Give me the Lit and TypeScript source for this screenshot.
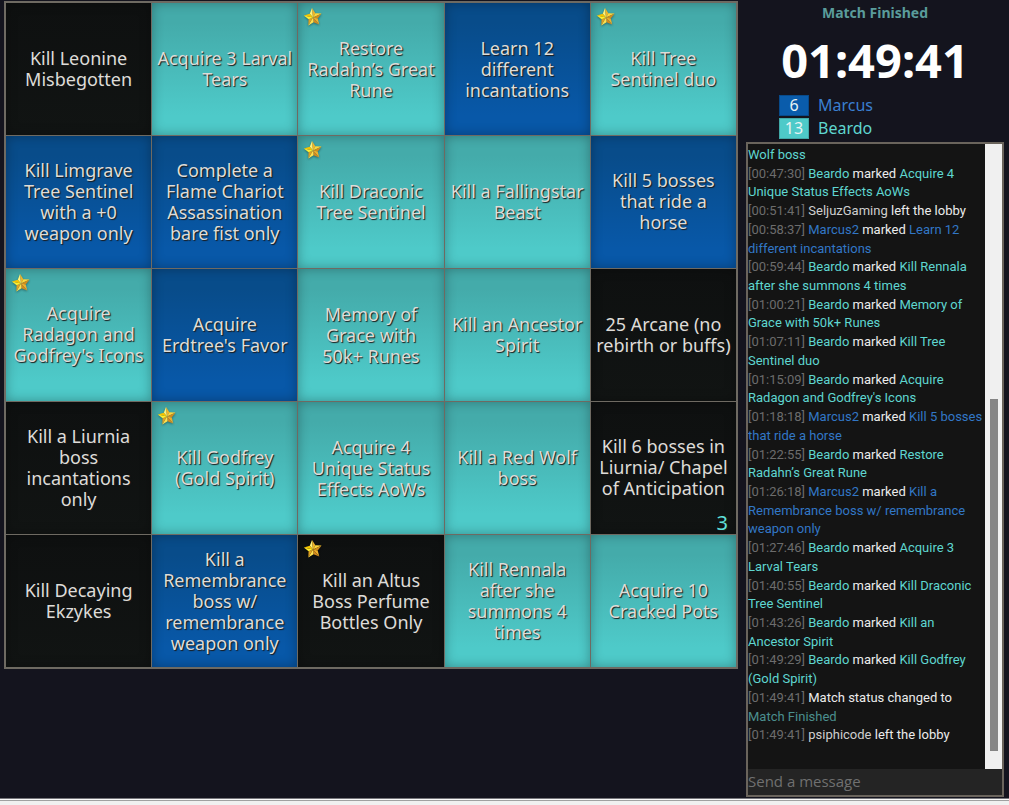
import { LitElement, html, css, svg, nothing } from "lit";
import { customElement, property } from "lit/decorators.js";
import { classMap } from "lit/directives/class-map.js";

type Owner = "none" | "marcus" | "beardo";

interface Goal {
  text: string;
  owner: Owner;
  starred?: boolean;
  count?: number;
}

const goals: Goal[] = [
  { text: "Kill Leonine\nMisbegotten", owner: "none" },
  { text: "Acquire 3 Larval\nTears", owner: "beardo" },
  { text: "Restore\nRadahn’s Great\nRune", owner: "beardo", starred: true },
  { text: "Learn 12\ndifferent\nincantations", owner: "marcus" },
  { text: "Kill Tree\nSentinel duo", owner: "beardo", starred: true },
  { text: "Kill Limgrave\nTree Sentinel\nwith a +0\nweapon only", owner: "marcus" },
  { text: "Complete a\nFlame Chariot\nAssassination\nbare fist only", owner: "marcus" },
  { text: "Kill Draconic\nTree Sentinel", owner: "beardo", starred: true },
  { text: "Kill a Fallingstar\nBeast", owner: "beardo" },
  { text: "Kill 5 bosses\nthat ride a\nhorse", owner: "marcus" },
  { text: "Acquire\nRadagon and\nGodfrey's Icons", owner: "beardo", starred: true },
  { text: "Acquire\nErdtree's Favor", owner: "marcus" },
  { text: "Memory of\nGrace with\n50k+ Runes", owner: "beardo" },
  { text: "Kill an Ancestor\nSpirit", owner: "beardo" },
  { text: "25 Arcane (no\nrebirth or buffs)", owner: "none" },
  { text: "Kill a Liurnia\nboss\nincantations\nonly", owner: "none" },
  { text: "Kill Godfrey\n(Gold Spirit)", owner: "beardo", starred: true },
  { text: "Acquire 4\nUnique Status\nEffects AoWs", owner: "beardo" },
  { text: "Kill a Red Wolf\nboss", owner: "beardo" },
  { text: "Kill 6 bosses in\nLiurnia/ Chapel\nof Anticipation", owner: "none", count: 3 },
  { text: "Kill Decaying\nEkzykes", owner: "none" },
  { text: "Kill a\nRemembrance\nboss w/\nremembrance\nweapon only", owner: "marcus" },
  { text: "Kill an Altus\nBoss Perfume\nBottles Only", owner: "none", starred: true },
  { text: "Kill Rennala\nafter she\nsummons 4\ntimes", owner: "beardo" },
  { text: "Acquire 10\nCracked Pots", owner: "beardo" },
];

interface Part {
  text: string;
  tone: "time" | "beardo" | "marcus" | "guest" | "plain" | "status";
}

// A message is a list of lines, a line a list of coloured parts.
type Message = Part[][];

const marked = (time: string, who: "beardo" | "marcus", goal: string): Message => {
  const [first, ...rest] = goal.split("\n");
  return [
    [
      { text: `[${time}]`, tone: "time" },
      { text: who === "beardo" ? "Beardo" : "Marcus2", tone: who },
      { text: "marked", tone: "plain" },
      { text: first, tone: who },
    ],
    ...rest.map((text): Part[] => [{ text, tone: who }]),
  ];
};

const left = (time: string, who: string): Message => [
  [
    { text: `[${time}]`, tone: "time" },
    { text: who, tone: "guest" },
    { text: "left the lobby", tone: "plain" },
  ],
];

const messages: Message[] = [
  [[{ text: "Wolf boss", tone: "beardo" }]],
  marked("00:47:30", "beardo", "Acquire 4\nUnique Status Effects AoWs"),
  left("00:51:41", "SeljuzGaming"),
  marked("00:58:37", "marcus", "Learn 12\ndifferent incantations"),
  marked("00:59:44", "beardo", "Kill Rennala\nafter she summons 4 times"),
  marked("01:00:21", "beardo", "Memory of\nGrace with 50k+ Runes"),
  marked("01:07:11", "beardo", "Kill Tree\nSentinel duo"),
  marked("01:15:09", "beardo", "Acquire\nRadagon and Godfrey's Icons"),
  marked("01:18:18", "marcus", "Kill 5 bosses\nthat ride a horse"),
  marked("01:22:55", "beardo", "Restore\nRadahn’s Great Rune"),
  marked("01:26:18", "marcus", "Kill a\nRemembrance boss w/ remembrance\nweapon only"),
  marked("01:27:46", "beardo", "Acquire 3\nLarval Tears"),
  marked("01:40:55", "beardo", "Kill Draconic\nTree Sentinel"),
  marked("01:43:26", "beardo", "Kill an\nAncestor Spirit"),
  marked("01:49:29", "beardo", "Kill Godfrey\n(Gold Spirit)"),
  [
    [
      { text: "[01:49:41]", tone: "time" },
      { text: "Match status changed to", tone: "plain" },
    ],
    [{ text: "Match Finished", tone: "status" }],
  ],
  left("01:49:41", "psiphicode"),
];

// Five-pointed star, each arm split into a lit and a shaded facet.
const starFacets = () => {
  const point = (radius: number, degrees: number) => {
    const a = (degrees * Math.PI) / 180;
    return `${(10 + radius * Math.sin(a)).toFixed(2)},${(10.4 - radius * Math.cos(a)).toFixed(2)}`;
  };
  const tilt = -6;
  return [0, 72, 144, 216, 288].map((d, i) => {
    const lit = ["#fff27a", "#ffd83c", "#eeb02c", "#ffe250", "#ffee30"][i];
    const shade = ["#f0b428", "#cf8c1c", "#d48a1c", "#e0a020", "#f6c400"][i];
    const tip = point(9.4, d + tilt);
    return svg`
      <polygon points="10,10.4 ${point(4.8, d - 36 + tilt)} ${tip}" fill=${lit}></polygon>
      <polygon points="10,10.4 ${tip} ${point(4.8, d + 36 + tilt)}" fill=${shade}></polygon>`;
  });
};

@customElement("bingo-cell")
export class BingoCell extends LitElement {
  @property({ attribute: false }) goal!: Goal;

  static styles = css`
    :host {
      display: block;
      min-width: 0;
      aspect-ratio: 11 / 10;
    }
    .cell {
      position: relative;
      display: flex;
      align-items: center;
      justify-content: center;
      width: 100%;
      height: 100%;
      margin: 0;
      padding: 0;
      border: 0;
      border-radius: 0;
      font: 18px/21px "Noto Sans", sans-serif;
      color: #dedcd8;
      text-align: center;
      text-shadow: 1px 1px 1px #1a1a1a;
      box-shadow: inset 0 0 12px rgba(0, 0, 0, 0.3);
      cursor: pointer;
    }
    .none {
      background: linear-gradient(#0e1010, #111413);
    }
    .marcus {
      background: linear-gradient(#084c8a 15%, #0858a8 85%);
    }
    .beardo {
      background: linear-gradient(#44abaa 15%, #4ecac9 85%);
    }
    .label {
      white-space: pre;
    }
    .star {
      position: absolute;
      top: 4px;
      left: 5px;
      width: 20px;
      height: 20px;
      filter: drop-shadow(0 1px 1px rgba(0, 0, 0, 0.4));
    }
    .count {
      position: absolute;
      right: 8px;
      bottom: 1px;
      font-size: 20px;
      color: #5fe0dc;
    }
  `;

  render() {
    const { text, owner, starred, count } = this.goal;
    return html`<button type="button" class=${classMap({ cell: true, [owner]: true })}>
      ${starred
        ? html`<svg class="star" viewBox="0 0 20 20" aria-hidden="true">${starFacets()}</svg>`
        : nothing}
      <span class="label">${text}</span>
      ${count ? html`<span class="count">${count}</span>` : nothing}
    </button>`;
  }
}

@customElement("match-chat")
export class MatchChat extends LitElement {
  static styles = css`
    :host {
      display: flex;
      flex-direction: column;
      border: 2px solid #6a645c;
      background: #141414;
    }
    .history {
      display: flex;
      flex: 1;
      min-height: 0;
    }
    .log {
      flex: 1;
      min-width: 0;
      overflow: hidden;
      margin: 0;
      padding: 2px 0 0;
      list-style: none;
      font-family: Roboto, sans-serif;
      font-size: 13px;
      line-height: 1.44;
    }
    .line {
      white-space: nowrap;
    }
    .time {
      color: #6c6c6c;
    }
    .beardo {
      color: #5fd6d0;
    }
    .marcus {
      color: #3277c6;
    }
    .guest {
      color: #cfcfcf;
    }
    .plain {
      color: #ececec;
    }
    .status {
      color: #4b8f8e;
    }
    .track {
      display: grid;
      grid-template-rows: 255fr 351fr 18fr;
      width: 17px;
      background: #f0f0f0;
    }
    .thumb {
      grid-row: 2;
      margin: 0 4px 0 5px;
      background: #858585;
    }
    .message {
      box-sizing: border-box;
      width: 100%;
      height: 26px;
      padding: 0 0 2px;
      border: 0;
      outline: 0;
      background: #242424;
      color: #ececec;
      font: 15px "Open Sans", sans-serif;
    }
    .message::placeholder {
      color: #707070;
      opacity: 1;
    }
  `;

  render() {
    return html`
      <div class="history">
        <ul class="log">
          ${messages.map(
            (lines) =>
              html`<li>${lines.map(
                (parts) =>
                  html`<div class="line">${parts.map(
                    (p, i) => html`${i ? " " : ""}<span class=${p.tone}>${p.text}</span>`
                  )}</div>`
              )}</li>`
          )}
        </ul>
        <div class="track"><div class="thumb"></div></div>
      </div>
      <input class="message" type="text" placeholder="Send a message" aria-label="Send a message" />
    `;
  }
}

@customElement("app-root")
export class AppRoot extends LitElement {
  static styles = css`
    :host {
      display: flex;
      flex-direction: column;
      box-sizing: border-box;
      min-height: 100vh;
      background: #14141e;
      font-family: "Noto Sans", sans-serif;
    }
    .page {
      display: flex;
      flex: 1;
      align-items: stretch;
      gap: 8px;
      padding: 1px 5px 1px 4px;
    }
    .board {
      display: grid;
      flex: 1;
      align-self: flex-start;
      grid-template-columns: repeat(5, 1fr);
      gap: 1px;
      padding: 2px;
      background: #6e6a62;
    }
    .side {
      display: flex;
      flex-direction: column;
      width: 258px;
    }
    .status {
      margin: 0;
      font-size: 14px;
      line-height: 24px;
      font-weight: 700;
      text-align: center;
      color: #5a9c9b;
    }
    .timer {
      padding: 10px 0;
      font-size: 47px;
      line-height: 50px;
      font-weight: 700;
      text-align: center;
      color: #ffffff;
    }
    .players {
      display: grid;
      gap: 2px;
      margin: 0 0 3px 33px;
      padding: 0;
      list-style: none;
      font-size: 16px;
      line-height: 19px;
    }
    .player {
      display: flex;
      gap: 9px;
    }
    .score {
      width: 28px;
      border: 1px solid;
      text-align: center;
      color: #e8f4f4;
    }
    .name {
      padding: 1px 0;
    }
    .marcus .score {
      background: #0a5cab;
      border-color: #084a8a;
    }
    .beardo .score {
      background: #4ecac9;
      border-color: #41a9a8;
    }
    .marcus .name {
      color: #3a7fd0;
    }
    .beardo .name {
      color: #5fd6d0;
    }
    .chat {
      flex: 1;
    }
    .edge {
      height: 3px;
      border-top: 1px solid #77777c;
      border-bottom: 1px solid #a0a0a0;
      box-sizing: border-box;
      background: #fafafa;
    }
    .footer {
      height: 4px;
      background: #f0f0f0;
    }
  `;

  render() {
    return html`
      <main class="page">
        <section class="board" aria-label="Bingo board">
          ${goals.map((goal) => html`<bingo-cell .goal=${goal}></bingo-cell>`)}
        </section>
        <aside class="side">
          <h1 class="status">Match Finished</h1>
          <div class="timer" role="timer">01:49:41</div>
          <ul class="players">
            <li class="player marcus"><span class="score">6</span><span class="name">Marcus</span></li>
            <li class="player beardo"><span class="score">13</span><span class="name">Beardo</span></li>
          </ul>
          <match-chat class="chat"></match-chat>
        </aside>
      </main>
      <div class="edge"></div>
      <div class="footer"></div>
    `;
  }
}
